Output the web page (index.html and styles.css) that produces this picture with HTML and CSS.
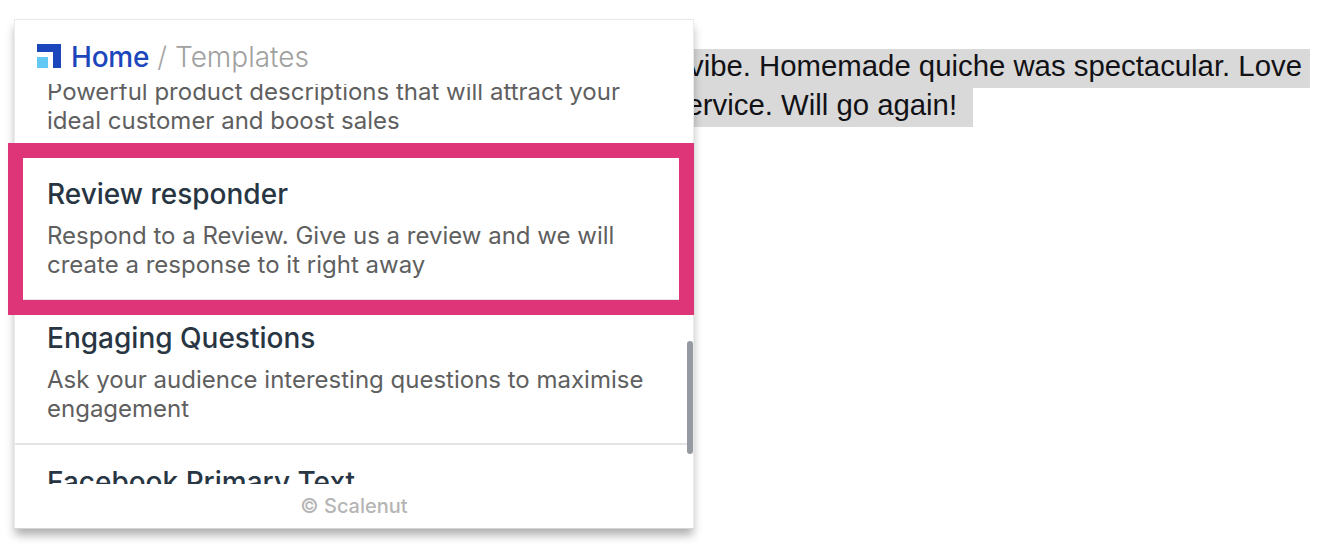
FILE: index.html
```
<!DOCTYPE html>
<html lang="en">
  <head>
    <meta charset="UTF-8" />
    <title>Scalenut Templates</title>
    <link rel="stylesheet" href="styles.css">
  </head>
  <body>
    <div class="popup">
      <div class="breadcrumb">
        <svg class="logo" width="24" height="24" viewBox="0 0 24 24">
          <path d="M0 0h24v24h-8V8H0z" fill="#1c46bb" />
          <path d="M0 13h11v11H0z" fill="#62c9f5" />
        </svg>
        <a class="home">Home</a>
        <span class="separator">/</span>
        <span class="current">Templates</span>
      </div>
      <div class="template-list">
        <div class="template">
          <h2>Product Description</h2>
          <p>Powerful product descriptions that will attract your<br />ideal customer and boost sales</p>
        </div>
        <div class="template">
          <h2>Review responder</h2>
          <p>Respond to a Review. Give us a review and we will<br />create a response to it right away</p>
        </div>
        <div class="template">
          <h2>Engaging Questions</h2>
          <p>Ask your audience interesting questions to maximise<br />engagement</p>
        </div>
        <div class="template">
          <h2>Facebook Primary Text</h2>
        </div>
      </div>
      <div class="footer">© Scalenut</div>
      <div class="scroll-thumb"></div>
      <div class="highlight"></div>
    </div>
    <div class="review">
      <div class="line first"><span>vibe. Homemade quiche was spectacular. Love </span></div>
      <div class="line second"><span>ervice. Will go again!  </span></div>
    </div>
  </body>
</html>
```

FILE: styles.css
```
* {
  box-sizing: border-box;
}

body {
  font-family: Inter, "Liberation Sans", sans-serif;
  background: #fff;
  margin: 0;
  height: 560px;
  display: flex;
  align-items: flex-start;
  overflow: hidden;
}

.popup {
  position: relative;
  z-index: 1;
  flex: none;
  width: 680px;
  height: 510px;
  margin: 19px 0 0 14px;
  background: #fff;
  border: 1px solid #ebebeb;
  border-bottom-color: #d4d4d4;
  box-shadow: 0 7px 9px -1px rgba(0, 0, 0, 0.32);
}

.breadcrumb {
  display: flex;
  align-items: center;
  height: 64px;
  padding: 10px 22px 0;
  font-size: 28px;
  line-height: 34px;
}

.logo {
  margin: -2px 10px 0 0;
}

.home {
  color: #1c46bb;
  font-weight: 500;
  letter-spacing: -0.2px;
}

.separator {
  color: #a6a6a6;
  font-weight: 300;
  margin: 0 8px;
}

.current {
  color: #a0a0a0;
  font-weight: 300;
}

/* scrolled so that the first template is cut at the top */
.template-list {
  display: flex;
  flex-direction: column;
  justify-content: flex-end;
  height: 400px;
  overflow: hidden;
}

.template {
  flex: none;
  height: 144px;
  padding: 20px 32px;
  border-bottom: 2px solid #e4e4e4;
}

.template:last-child {
  height: 39px;
  padding-bottom: 0;
  border-bottom: none;
}

.template h2 {
  margin: 0 0 10px;
  font-size: 28px;
  font-weight: 500;
  line-height: 34px;
  color: #283543;
}

.template p {
  margin: 0;
  font-size: 24px;
  line-height: 29px;
  color: #5f5f5f;
  white-space: nowrap;
}

.footer {
  height: 44px;
  line-height: 44px;
  text-align: center;
  font-size: 20px;
  font-weight: 500;
  color: #b5b5b5;
}

.scroll-thumb {
  position: absolute;
  top: 321px;
  right: 0;
  width: 6px;
  height: 113px;
  border-radius: 3px;
  background: #949aa0;
}

.highlight {
  position: absolute;
  top: 123px;
  left: -7px;
  width: 686px;
  height: 172px;
  border: 15px solid #de3579;
}

.review {
  margin-top: 49px;
  font-family: "Liberation Sans", Arial, sans-serif;
  font-size: 29.33px;
  line-height: 33px;
  color: #111116;
}

.line {
  height: 39px;
  white-space: pre;
}

.line span {
  display: inline-block;
  padding-bottom: 6px;
  background: #d9d9d9;
}

.first {
  margin-left: -5px;
}

.second {
  margin-left: -7.5px;
}
```
